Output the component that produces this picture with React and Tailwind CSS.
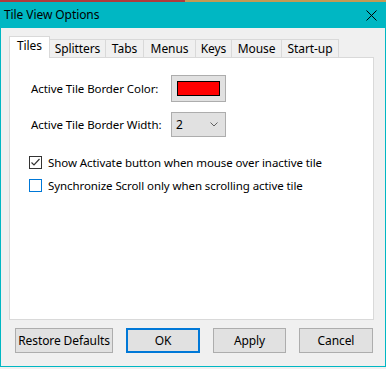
import { useState } from 'react';

const tabs = [
  { label: 'Tiles', w: 'w-[41px]' },
  { label: 'Splitters', w: 'w-[57px]' },
  { label: 'Tabs', w: 'w-[39px]' },
  { label: 'Menus', w: 'w-[53px]' },
  { label: 'Keys', w: 'w-[37px]' },
  { label: 'Mouse', w: 'w-[51px]' },
  { label: 'Start-up', w: 'w-[58px]' },
];

function CloseIcon() {
  return (
    <svg width="11" height="11" viewBox="0 0 11 11" className="block">
      <path d="M0.5 0.5 L10.5 10.5 M10.5 0.5 L0.5 10.5" stroke="#000" strokeWidth="1" fill="none" />
    </svg>
  );
}

function Checkbox({ checked, focus }) {
  return (
    <span
      className={
        'w-[13px] h-[13px] shrink-0 bg-white border flex items-center justify-center ' +
        (focus ? 'border-[#0078d7]' : 'border-[#333333]')
      }
    >
      {checked && (
        <svg width="11" height="11" viewBox="0 0 11 11" className="block">
          <path d="M1.5 5.5 L4 8 L9.5 2" stroke="#333" strokeWidth="1.2" fill="none" />
        </svg>
      )}
    </span>
  );
}

function Button({ children, w, primary }) {
  return (
    <button
      className={
        'h-[25px] bg-[#e1e1e1] text-black text-[12px] tracking-[-0.1px] ' +
        w +
        (primary ? ' border-2 border-[#0078d7]' : ' border border-[#adadad]')
      }
    >
      {children}
    </button>
  );
}

export default function App() {
  const [active] = useState(0);
  const [showActivate, setShowActivate] = useState(true);
  const [sync, setSync] = useState(false);

  return (
    <div className="w-[386px] h-[369px] bg-[#f0f0f0] flex flex-col text-[11.5px] tracking-[-0.08px] text-black font-['Noto_Sans',sans-serif] leading-none">
      {/* desktop strip above the window */}
      <div className="h-[2px] flex shrink-0">
        <div className="w-[185px] bg-[#b03a3c]" />
        <div className="flex-1 bg-[#c49a54]" />
      </div>

      <div className="h-[365px] flex flex-col border-x border-b border-[#00b7c3] shrink-0">
        <div className="h-[26px] bg-[#00b7c3] flex items-center justify-between pl-[3px] pr-[8px] shrink-0">
          <span className="text-[12px]">Tile View Options</span>
          <CloseIcon />
        </div>

        <div className="flex-1 bg-[#f0f0f0] pl-[8px] pt-[8px]">
          <div className="flex items-end h-[21px]">
            {tabs.map((t, i) =>
              i === active ? (
                <div
                  key={t.label}
                  className={
                    t.w +
                    ' h-[22px] -mb-px relative z-10 bg-white border border-b-0 border-[#d9d9d9] flex items-start justify-center pt-[3px] text-[12px]'
                  }
                >
                  {t.label}
                </div>
              ) : (
                <div
                  key={t.label}
                  className={
                    t.w +
                    ' h-[18px] -ml-px bg-[#f0f0f0] border border-b-0 border-[#d9d9d9] flex items-start justify-center pt-[3px] text-[12px]'
                  }
                >
                  {t.label}
                </div>
              )
            )}
          </div>

          <div className="w-[365px] h-[263px] bg-white border border-[#d9d9d9] pt-[17px] pl-[19px]">
            <div className="grid grid-cols-[140px_auto] items-center gap-y-[10px] pl-[2px]">
              <span>Active Tile Border Color:</span>
              <div className="w-[55px] h-[27px] bg-[#e1e1e1] border border-[#adadad] flex items-center justify-center">
                <div className="w-[43px] h-[15px] bg-[#ff0000] border border-black" />
              </div>
              <span>Active Tile Border Width:</span>
              <div className="w-[55px] h-[25px] bg-[#e1e1e1] border border-[#adadad] flex items-center justify-between pl-[4px] pr-[7px]">
                <span className="text-[12px]">2</span>
                <svg width="8" height="5" viewBox="0 0 8 5" className="block">
                  <path d="M0.5 0.5 L4 4 L7.5 0.5" stroke="#606060" strokeWidth="1" fill="none" />
                </svg>
              </div>
            </div>

            <div className="mt-[19px] flex flex-col gap-[10px]">
              <label className="flex items-center gap-[6px] h-[13px]" onClick={() => setShowActivate(!showActivate)}>
                <Checkbox checked={showActivate} />
                <span>Show Activate button when mouse over inactive tile</span>
              </label>
              <label className="flex items-center gap-[6px] h-[13px]" onClick={() => setSync(!sync)}>
                <Checkbox checked={sync} focus />
                <span>Synchronize Scroll only when scrolling active tile</span>
              </label>
            </div>
          </div>

          <div className="flex pl-[6px] pt-[8px] gap-[13px]">
            <Button w="w-[98px]">Restore Defaults</Button>
            <Button w="w-[74px]" primary>OK</Button>
            <Button w="w-[73px]">Apply</Button>
            <Button w="w-[74px]">Cancel</Button>
          </div>
        </div>
      </div>
    </div>
  );
}
